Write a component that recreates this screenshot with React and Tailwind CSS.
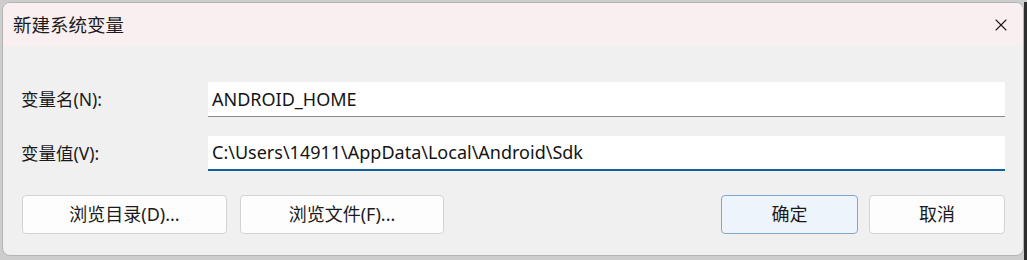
import { X } from 'lucide-react';

const font = { fontFamily: '"Noto Sans", "Noto Sans CJK SC", sans-serif' };

function Field({ label, value, focused }) {
  return (
    <div className="flex items-center">
      <div className="w-[187px] text-[17.5px] leading-none text-[#1b1b1b]">{label}</div>
      <div
        className={
          'flex h-[35px] flex-1 items-center bg-white pl-[4px] text-[18px] text-[#141414] ' +
          (focused ? 'border-b-2 border-[#0f62a0]' : 'border-b border-[#8a8a8a]')
        }
      >
        {value}
      </div>
    </div>
  );
}

function Btn({ children, primary, className = '' }) {
  return (
    <button
      className={
        'h-[39px] rounded-[4px] border text-[18px] text-[#1b1b1b] ' +
        (primary ? 'border-[#7fa8cf] bg-[#eef4fb] ' : 'border-[#d3d3d3] bg-[#fdfdfd] ') +
        className
      }
    >
      {children}
    </button>
  );
}

export default function App() {
  return (
    <div className="flex h-[260px] w-[1027px] bg-[#cdcdcd] pt-[2px] pl-[2px]" style={font}>
      <div className="flex h-[254px] w-[1022px] flex-col overflow-hidden rounded-[8px] border border-[#b4b4b4] bg-[#f0f0f0]">
        <div className="flex h-[43px] items-center justify-between bg-[#f9eff1] pl-[10px] pr-[12px]">
          <span className="text-[18.5px] text-[#1b1b1b]">新建系统变量</span>
          <X size={20} strokeWidth={1.3} className="text-[#1b1b1b]" />
        </div>
        <div className="flex flex-1 flex-col px-[18px] pt-[36px]">
          <div className="flex flex-col gap-[19px]">
            <Field label="变量名(N):" value="ANDROID_HOME" />
            <Field label="变量值(V):" value="C:\Users\14911\AppData\Local\Android\Sdk" focused />
          </div>
          <div className="mt-[24px] flex items-center pl-[1px]">
            <Btn className="w-[205px]">浏览目录(D)...</Btn>
            <Btn className="ml-[13px] w-[204px]">浏览文件(F)...</Btn>
            <div className="flex-1" />
            <Btn primary className="w-[137px]">确定</Btn>
            <Btn className="ml-[11px] w-[136px]">取消</Btn>
          </div>
        </div>
      </div>
      <div className="flex-1 bg-[#2e2e2e]" />
    </div>
  );
}
